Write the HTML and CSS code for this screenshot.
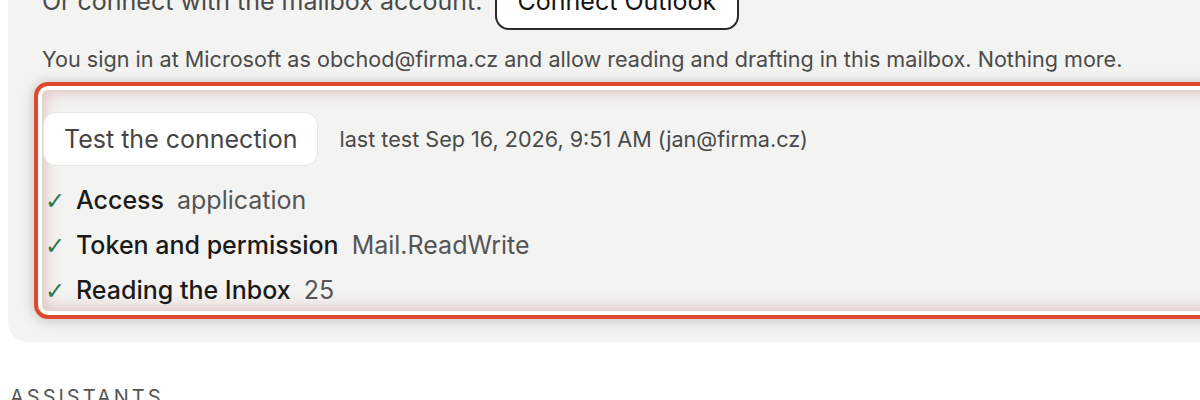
FILE: index.html
```html
<!DOCTYPE html>
<html lang="en">
<head>
<meta charset="utf-8">
<title>Mailbox connection</title>
<link rel="stylesheet" href="styles.css">
</head>
<body>
<div class="page">
  <section class="card">
    <div class="connect-row">
      <span class="connect-label">Or connect with the mailbox account:</span>
      <button class="btn-outline" type="button">Connect Outlook</button>
    </div>
    <p class="note">You sign in at Microsoft as obchod@firma.cz and allow reading and drafting in this mailbox. Nothing more.</p>
    <div class="check-block">
      <div class="test-row">
        <button class="btn-test" type="button">Test the connection</button>
        <span class="meta">last test Sep 16, 2026, 9:51 AM (jan@firma.cz)</span>
      </div>
      <ul class="checks">
        <li><span class="tick">✓</span><strong>Access</strong><span class="val">application</span></li>
        <li><span class="tick">✓</span><strong>Token and permission</strong><span class="val">Mail.ReadWrite</span></li>
        <li><span class="tick">✓</span><strong>Reading the Inbox</strong><span class="val">25</span></li>
      </ul>
    </div>
  </section>
  <h2 class="section-title">ASSISTANTS</h2>
</div>
</body>
</html>
```

FILE: styles.css
```css
html, body {
  margin: 0;
  padding: 0;
  overflow: hidden;
  background: #ffffff;
}

body {
  font-family: Inter, "Noto Sans", "Liberation Sans", sans-serif;
  color: #4a4a4a;
}

.page {
  margin-top: -48px;
  padding-left: 8px;
  width: 1300px;
}

.card {
  background: #f3f3f1;
  border-radius: 20px;
  padding: 20px 0 23px 34px;
}

.connect-row {
  display: flex;
  align-items: center;
  gap: 12px;
}

.connect-label {
  font-size: 25px;
  color: #4a4a4a;
}

.btn-outline {
  font-family: inherit;
  font-size: 25px;
  line-height: 30px;
  color: #151515;
  background: #ffffff;
  border: 2px solid #2a2a2a;
  border-radius: 14px;
  padding: 12px 21px;
}

.note {
  margin: 14px 0 8px;
  font-size: 21.6px;
  line-height: 30px;
  color: #4b4b4b;
}

.check-block {
  margin-left: -8px;
  border: 4px solid #e0482b;
  border-radius: 14px;
  padding: 26px 0 2px 5px;
  box-shadow:
    0 1px 12px 2px rgba(0, 0, 0, 0.16),
    inset 0 0 0 4px #ffffff,
    inset 0 0 16px 6px rgba(185, 110, 100, 0.38);
}

.test-row {
  display: flex;
  align-items: center;
  gap: 21px;
}

.btn-test {
  font-family: inherit;
  font-size: 25px;
  line-height: 30px;
  color: #454545;
  background: #ffffff;
  border: 1px solid #e6e6e4;
  border-radius: 13px;
  padding: 11px 20px;
}

.meta {
  font-size: 21.6px;
  color: #4a4a4a;
}

.checks {
  list-style: none;
  margin: 12px 0 0;
  padding: 0;
}

.checks li {
  font-size: 25px;
  line-height: 45px;
}

.tick {
  display: inline-block;
  width: 33px;
  padding-left: 2px;
  box-sizing: border-box;
  font-family: "DejaVu Sans", sans-serif;
  font-size: 24px;
  line-height: 1;
  color: #2c7a4b;
}

.checks strong {
  font-weight: 500;
  color: #1a1a1a;
  margin-right: 13px;
}

.val {
  color: #555555;
}

.section-title {
  margin: 43px 0 0 2px;
  font-size: 20px;
  line-height: 24px;
  font-weight: 400;
  letter-spacing: 3px;
  color: #555555;
}
```
